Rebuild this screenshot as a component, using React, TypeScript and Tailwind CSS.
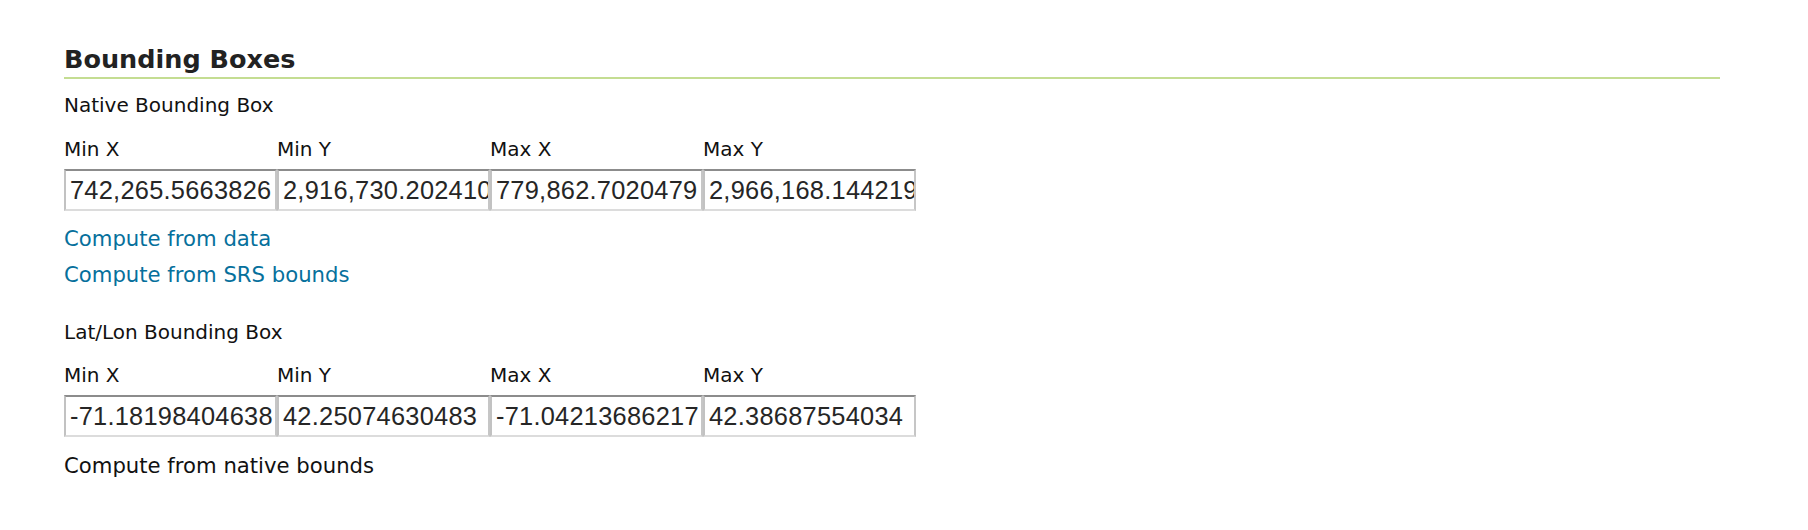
import React from "react";

const cols = ["Min X", "Min Y", "Max X", "Max Y"];

function BoxRow({ values, top }: { values: string[]; top: string }) {
  return (
    <div>
      <div className={`grid grid-cols-[repeat(4,213px)] ${top}`}>
        {cols.map((c) => (
          <div key={c} className="text-[20px] leading-[24px] text-[#111]">
            {c}
          </div>
        ))}
      </div>
      <div className="grid grid-cols-[repeat(4,213px)] mt-[8px]">
        {values.map((v, i) => (
          <input
            key={i}
            readOnly
            value={v}
            className="h-[42px] w-[213px] border-2 border-t-[#8c8c8c] border-l-[#c2c2c2] border-r-[#c6c6c6] border-b-[#dcdcdc] bg-white pl-[4px] pr-0 text-[25.4px] tracking-[0.25px] text-[#262626] outline-none"
            style={{ fontFamily: '"Liberation Sans", Arial, sans-serif' }}
          />
        ))}
      </div>
    </div>
  );
}

export default function App() {
  return (
    <div
      className="w-[1808px] h-[530px] bg-white pl-[64px] pr-[88px] pt-[44px]"
      style={{ fontFamily: '"DejaVu Sans", Verdana, sans-serif' }}
    >
      <h2 className="text-[25.5px] leading-[30px] font-bold text-[#222] pb-[3px] border-b-2 border-[#c4dd92]">
        Bounding Boxes
      </h2>
      <div className="mt-[14px] text-[20px] leading-[24px] text-[#111]">Native Bounding Box</div>
      <BoxRow
        top="mt-[20px]"
        values={["742,265.5663826", "2,916,730.202410", "779,862.7020479", "2,966,168.144219"]}
      />
      <div className="mt-[16px] flex flex-col items-start gap-[12px] text-[21.2px] leading-[24px] text-[#06709c]">
        <a href="#" className="hover:underline">Compute from data</a>
        <a href="#" className="hover:underline">Compute from SRS bounds</a>
      </div>
      <div className="mt-[33px] text-[20px] leading-[24px] text-[#111]">Lat/Lon Bounding Box</div>
      <BoxRow
        top="mt-[19px]"
        values={["-71.18198404638", "42.25074630483", "-71.04213686217", "42.38687554034"]}
      />
      <div className="mt-[17px] text-[21.2px] leading-[24px] text-[#111]">Compute from native bounds</div>
    </div>
  );
}
